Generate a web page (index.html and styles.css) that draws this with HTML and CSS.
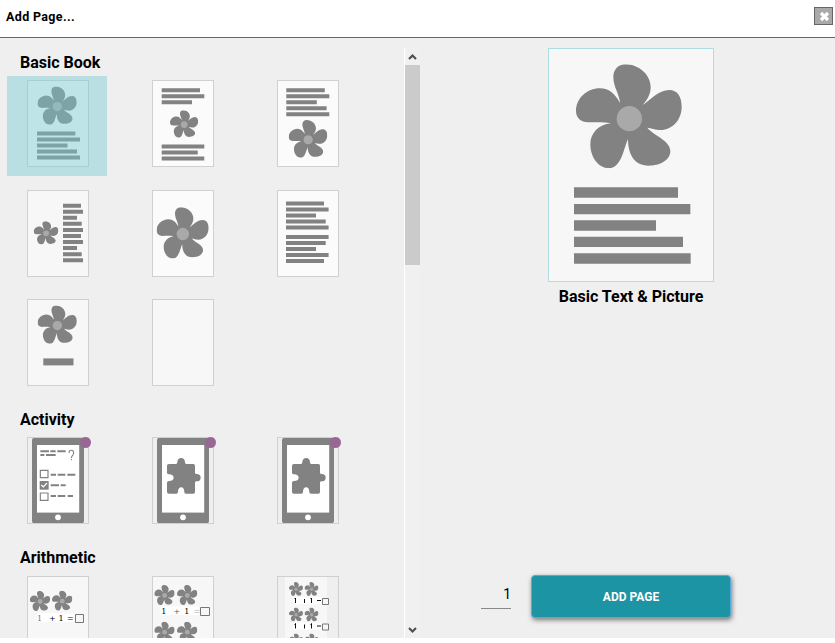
FILE: index.html
```html
<!DOCTYPE html>
<html lang="en">
<head>
<meta charset="utf-8">
<title>Add Page...</title>
<link rel="stylesheet" href="styles.css">
</head>
<body>
<svg class="defs" width="0" height="0">
  <symbol id="flower" viewBox="108 72 318 312" preserveAspectRatio="none">
    <path fill="#828282" d="M240 188C238 160 220 140 220 110C220 88 235 72 256 72C298 72 332 105 332 140C332 162 322 178 308 194C330 180 355 149 388 149C412 149 425 168 425 200C425 240 395 269 363 269C345 269 335 263 322 262C340 285 391 300 391 332C391 360 360 376 325 376C285 376 264 345 264 297C252 320 245 384 207 384C175 384 151 350 151 312C151 280 175 252 213 249C190 244 165 246 145 246C122 246 108 232 108 212C108 175 140 144 180 144C208 144 226 162 240 188Z"/>
    <circle cx="268" cy="235" r="38" fill="#a9a9a9"/>
  </symbol>
  <symbol id="tablet" viewBox="0 0 62 87">
    <rect x="5" y=".8" width="52" height="85.5" rx="2.5" fill="#828282"/>
    <rect x="10" y="8" width="42.2" height="67.6" fill="#fff"/>
    <circle cx="31" cy="80.3" r="2.9" fill="#fff"/>
  </symbol>
  <symbol id="puzzle" viewBox="0 0 62 87">
    <path transform="translate(-152 -32) scale(.33333)" fill="#828282" d="M507 177H528Q532 177 532 172C532 164 536 159 543.500 159C551 159 555 164 555 172Q555 177 559 177H580Q585 177 585 182V203Q585 207 590 207C598 207 602 211 602 218C602 225 598 229 590 229Q585 229 585 233V261Q585 266 580 266H558Q553 266 553 261C553 252 549 247 543.500 247C538 247 534 252 534 261Q534 266 529 266H507Q501 266 501 261V233Q501 228 507 228C516 228 521 224 521 218C521 212 516 208 507 208Q501 208 501 203V182Q501 177 507 177Z"/>
  </symbol>
</svg>
<div class="dialog">
  <header class="titlebar">
    <h1>Add Page...</h1>
    <button class="close" aria-label="Close"><svg width="17" height="16" viewBox="0 0 17 16"><path d="M6 5l7 7M13 5l-7 7" stroke="#fff" stroke-width="3.200"/></svg></button>
  </header>
  <main class="content">
    <section class="chooser">
      <h2>Basic Book</h2>
      <div class="grid">
        <div class="item selected"><svg class="thumb" viewBox="0 0 62 87"><use href="#flower" x="10.500" y="6.600" width="39.300" height="38.200"/><path class="bars" d="M10 53.500h38.300M10 59.500h43M10 65.500h30.500M10 71.500h40M10 77.500h43"/></svg></div>
        <div class="item"><svg class="thumb light" viewBox="0 0 62 87"><path class="bars" d="M9.700 10.300h38.300M9.700 16.300h42.600M9.700 22.300h30.300M9.700 66.500h42.600M9.700 72.500h36M9.700 78.500h42.600"/><use href="#flower" x="18" y="30.200" width="28.200" height="27.500"/></svg></div>
        <div class="item"><svg class="thumb light" viewBox="0 0 62 87"><path class="bars" d="M9.300 10.300h38.500M9.300 16.300h43M9.300 22.300h30.500M9.300 28.300h40.300M9.300 34.300h43"/><use href="#flower" x="11.700" y="40" width="38.700" height="37.800"/></svg></div>
        <div class="item"><svg class="thumb" viewBox="0 0 62 87"><use href="#flower" x="6.700" y="31.200" width="24.700" height="23.300"/><path class="bars" d="M36 15.700h18M36 21.700h20M36 27.800h14M36 33.800h18.700M36 39.900h20M36 46h18M36 52.100h20M36 58.100h14M36 64.200h18.700M36 70.300h20"/></svg></div>
        <div class="item"><svg class="thumb light" viewBox="0 0 62 87"><use href="#flower" x="4.600" y="17.300" width="52.200" height="51.300"/></svg></div>
        <div class="item"><svg class="thumb light" viewBox="0 0 62 87"><path class="bars" d="M9 13.500h38M9 19.500h42.600M9 25.500h30M9 31.500h39.700M9 37.500h42.600M9 47h42.600M9 53h39.700M9 59h30M9 65h42.600M9 71h38"/></svg></div>
        <div class="item"><svg class="thumb" viewBox="0 0 62 87"><use href="#flower" x="10.600" y="6.600" width="39.300" height="38.200"/><path fill="#828282" d="M16.300 59.400h30.200v7h-30.200z"/></svg></div>
        <div class="item"><svg class="thumb" viewBox="0 0 62 87"></svg></div>
      </div>
      <h2 class="activity">Activity</h2>
      <div class="grid short">
        <div class="item"><svg class="thumb clear" viewBox="0 0 62 87"><use href="#tablet"/>
          <g transform="translate(-27 -32) scale(.33333)" fill="none" stroke="#828282">
            <path stroke-width="6" d="M121 139h26M151 139h16M172 139h25M121 150h12M138 150h29"/>
            <path stroke-width="3.500" d="M121 196h23v22h-23zM121 264h23v22h-23z"/>
            <path fill="#828282" stroke="none" d="M119 228h27v26h-27z"/>
            <path stroke="#fff" stroke-width="3.500" d="M124 240l6 6 11-12"/>
            <path stroke-width="6" d="M152 209h16M173 209h23M202 209h24M152 241h25M182 241h15M152 273h16M173 273h23M203 273h16"/>
            <path stroke-width="3.200" d="M207 144C207 133 221 133 221 144C221 151 214 151 214 159M214 162v4"/>
          </g></svg><i class="badge"></i></div>
        <div class="item"><svg class="thumb clear" viewBox="0 0 62 87"><use href="#tablet"/><use href="#puzzle"/></svg><i class="badge"></i></div>
        <div class="item"><svg class="thumb clear" viewBox="0 0 62 87"><use href="#tablet"/><use href="#puzzle"/></svg><i class="badge"></i></div>
      </div>
      <h2 class="arithmetic">Arithmetic</h2>
      <div class="grid short">
        <div class="item"><svg class="thumb" viewBox="0 0 62 87"><use href="#flower" x="2.800" y="15" width="20.400" height="20"/><use href="#flower" x="25" y="14.700" width="20.400" height="20"/><path fill="#fff" d="M10 37.300h37v8.500h-37z"/><text class="sum" y="45"><tspan x="10" fill="#777">1</tspan><tspan x="22">+</tspan><tspan x="31.500">1</tspan><tspan x="40">=</tspan></text><path class="box" d="M48.500 38.500h8v8h-8z"/></svg></div>
        <div class="item"><svg class="thumb" viewBox="0 0 62 87"><use href="#flower" x="2.300" y="9" width="20.400" height="20"/><use href="#flower" x="25" y="9" width="20.400" height="20"/><path fill="#fff" d="M9 30.300h38v8.500h-38z"/><text class="sum" y="38"><tspan x="9.300">1</tspan><tspan x="21.500" fill="#555">+</tspan><tspan x="32.200">1</tspan><tspan x="41.500" fill="#aaa">=</tspan></text><path class="box" d="M48.500 31.500h9v8h-9z"/><use href="#flower" x="2.300" y="45.700" width="20.400" height="20"/><use href="#flower" x="25" y="45.700" width="20.400" height="20"/></svg></div>
        <div class="item"><svg class="thumb clear" viewBox="0 0 62 87"><path fill="#f7f7f7" d="M8 1h42v85h-42z"/>
          <g id="row"><use href="#flower" x="12" y="6" width="14" height="14"/><use href="#flower" x="27.500" y="6" width="14" height="14"/><path fill="#fff" d="M16 21h28v7h-28z"/><path d="M18.500 22v5M17.500 23l1-1M27.500 23v4M34.500 22v5M33.500 23l1-1M40 24.500h4" stroke="#111" fill="none"/><path class="box" d="M45.500 22.500h6v6h-6z"/></g>
          <use href="#row" y="25.500"/><use href="#row" y="51.500"/></svg></div>
      </div>
    </section>
    <div class="scrollbar">
      <svg width="15" height="17" viewBox="0 0 15 17"><path d="M4 11l3.500-3.500L11 11" fill="none" stroke="#505050" stroke-width="2.200"/></svg>
      <div class="handle"></div>
      <svg class="down" width="15" height="17" viewBox="0 0 15 17"><path d="M4 7l3.500 3.500L11 7" fill="none" stroke="#505050" stroke-width="2.200"/></svg>
    </div>
    <section class="preview">
      <svg class="large" viewBox="27 27 492 696"><use href="#flower" x="108" y="73" width="318" height="312"/><path fill="#828282" d="M102 442h312v31H102zM102 492h349v31H102zM102 541h246v31H102zM102 590h327v31H102zM102 640h350v31H102z"/></svg>
      <div class="caption">Basic Text &amp; Picture</div>
      <div class="actions"><div class="count">1</div><button class="add">ADD PAGE</button></div>
    </section>
  </main>
</div>
</body>
</html>
```
FILE: styles.css
```css
* { box-sizing: border-box; }
body { margin: 0; background: #fff; font-family: Roboto, "Liberation Sans", sans-serif; color: #000; overflow: hidden; }
.defs { position: absolute; }
.dialog { display: flex; flex-direction: column; height: 638px; background: #efefef; overflow: hidden; }
.titlebar { display: flex; flex: none; justify-content: space-between; height: 38px; padding: 7px 2px 0 6px; background: #fff; border-bottom: 1px solid #666; }
h1 { margin: 2px 0 0; font-size: 12.500px; line-height: 16px; letter-spacing: .35px; }
.close { display: flex; width: 19px; height: 18px; padding: 0; background: #a9a9a9; border: 1px solid #666; }
.content { display: flex; flex: 1; min-height: 0; padding-top: 10px; }
.chooser { width: 404px; overflow: hidden; padding-left: 7px; }
h2 { margin: 5px 0 3px 13px; font-size: 16px; line-height: 20px; font-weight: 700; }
.grid { display: grid; grid-template-columns: repeat(3, 125px); grid-auto-rows: 109.600px; }
.short { grid-auto-rows: 110px; }
h2.arithmetic { margin-bottom: 4px; }
.item { position: relative; width: 100px; height: 100px; padding: 4px 20px; }
.thumb { display: block; width: 62px; height: 87px; background: #f7f7f7; outline: 1px solid #d0d0d0; outline-offset: -1px; }
.light { background: #fbfbfb; }
.clear { background: none; }
.bars { stroke: #828282; stroke-width: 4; fill: none; }
.selected::after { content: ""; position: absolute; inset: 0; background: rgba(123, 203, 211, .45); }
.badge { position: absolute; left: 73px; top: 4px; width: 11px; height: 11px; border-radius: 50%; background: #976893; }
.sum { font: 8px "DejaVu Serif", serif; }
.box { fill: #f7f7f7; stroke: #777; }
.scrollbar { display: flex; flex-direction: column; width: 16px; border-left: 1px solid #fff; background: #f0f0f0; }
.handle { width: 15px; height: 200px; background: #cbcbcb; }
.down { margin-top: auto; }
.preview { display: flex; flex: 1; flex-direction: column; align-items: center; margin-left: 7px; }
.large { display: block; flex: none; width: 166px; height: 234px; background: #f7f7f7; border: 1px solid #aedde2; }
.caption { margin-top: 5px; font-size: 16px; line-height: 20px; font-weight: 700; }
.actions { display: flex; width: 250px; margin: auto 0 20px -50px; justify-content: space-between; align-items: flex-start; }
.count { width: 30px; height: 26px; margin-top: 8px; text-align: right; font-size: 14px; line-height: 23px; border-bottom: 1px solid #888; }
.add { width: 200px; height: 43px; padding: 0; border: 1px solid #58a9dc; border-radius: 4px; background: #1d94a4; color: #fff; font: 700 12px Roboto, sans-serif; box-shadow: 1px 2px 5px rgba(0, 0, 0, .5); }
```
